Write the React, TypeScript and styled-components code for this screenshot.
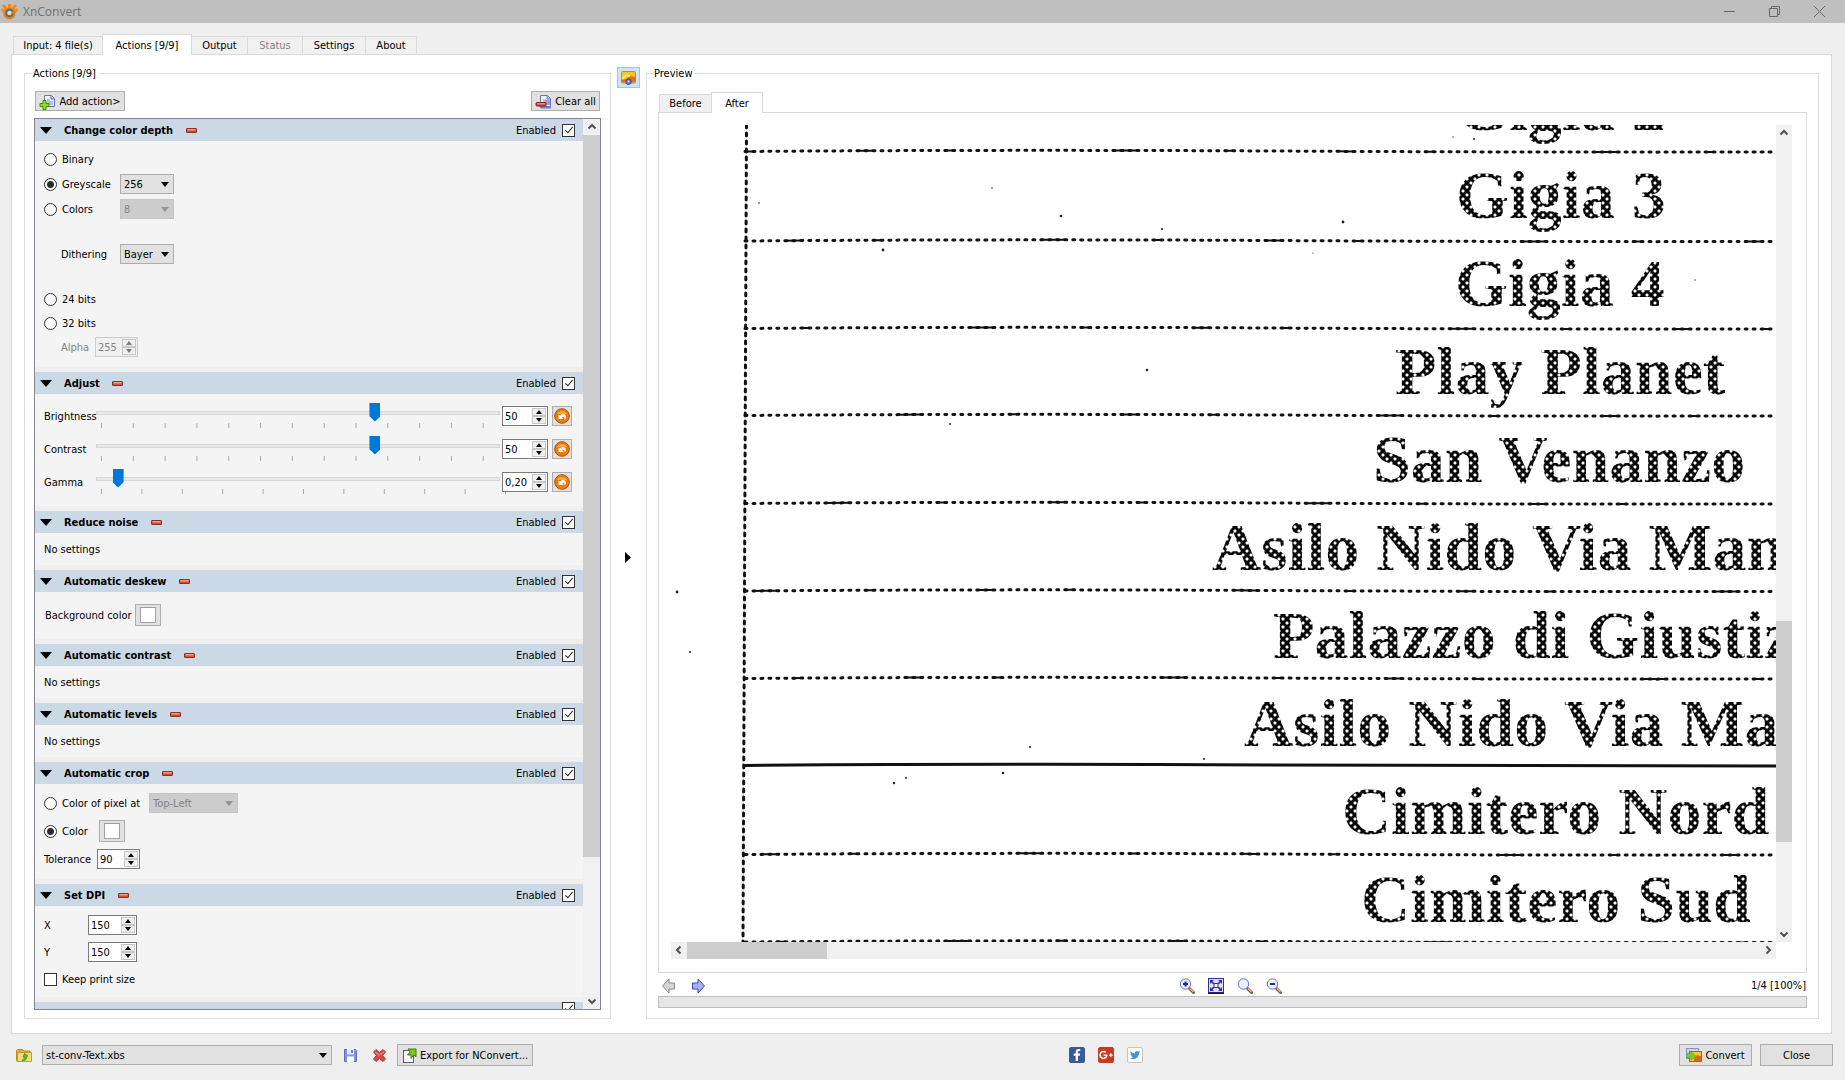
import React from "react";
import styled, { createGlobalStyle } from "styled-components";
import { FaFacebookF, FaGooglePlusG, FaTwitter } from "react-icons/fa";

const GlobalStyle = createGlobalStyle`
  *, *::before, *::after { box-sizing: border-box; }
  body {
    margin: 0;
    background: #efefef;
    color: #000;
    font-family: "DejaVu Sans Condensed", "Noto Sans", sans-serif;
    font-size: 11px;
    line-height: 16px;
  }
  button, input, select { font: inherit; color: inherit; margin: 0; }
  svg { display: block; }
`;

/* ---------- window ---------- */

const Window = styled.div`
  display: flex;
  flex-direction: column;
  height: 100vh;
  min-height: 1000px;
`;

const TitleBar = styled.header`
  display: flex;
  align-items: center;
  height: 23px;
  padding: 0 18px 0 1px;
  gap: 5px;
  background: #bfbfbf;
  color: #6e6e6e;
  font-family: "Open Sans", "Noto Sans", sans-serif;
  font-size: 12px;
`;

const TitleText = styled.h1`
  flex: 1;
  margin: 0;
  font: inherit;
`;

const WindowButtons = styled.div`
  display: flex;
  gap: 29px;
`;

const BareButton = styled.button`
  display: flex;
  align-items: center;
  justify-content: center;
  min-width: 16px;
  height: 16px;
  padding: 0;
  border: 0;
  background: none;
`;

/* ---------- tabs ---------- */

const TabBar = styled.nav<{ $pad: number }>`
  display: flex;
  align-items: flex-end;
  height: 20px;
  padding-left: ${(p) => p.$pad}px;
`;

const MainTabs = styled.div`
  padding: 11px 13px 0 11px;
`;

const Tab = styled.button<{ $active?: boolean; $width: number }>`
  width: ${(p) => p.$width}px;
  height: ${(p) => (p.$active ? 21 : 18)}px;
  margin-bottom: ${(p) => (p.$active ? -1 : 0)}px;
  padding: 1px 0 0;
  border: 1px solid #d9d9d9;
  border-bottom: 0;
  margin-left: -1px;
  background: ${(p) => (p.$active ? "#fff" : "#f0f0f0")};
  white-space: nowrap;
  z-index: ${(p) => (p.$active ? 1 : 0)};
  &:disabled { color: #838383; }
`;

const MainPane = styled.main`
  display: flex;
  flex: 1;
  min-height: 0;
  margin: 0 13px 0 11px;
  padding: 10px 12px 14px;
  border: 1px solid #d9d9d9;
  background: #fff;
`;

const Group = styled.fieldset<{ $grow?: boolean }>`
  display: flex;
  flex-direction: column;
  flex: ${(p) => (p.$grow ? "1 1 0" : "0 0 587px")};
  min-width: 0;
  margin: 0;
  padding: ${(p) => (p.$grow ? "11px 11px 10px" : "10px 9px 8px")};
  border: 1px solid #dcdcdc;
`;

const GroupTitle = styled.legend<{ $indent: number }>`
  margin-left: ${(p) => p.$indent}px;
  padding: 2px 3px 0 1px;
  line-height: 14px;
`;

/* ---------- buttons and fields ---------- */

const PushButton = styled.button<{ $width?: number; $tall?: boolean }>`
  display: flex;
  align-items: center;
  justify-content: center;
  gap: 3px;
  width: ${(p) => (p.$width ? `${p.$width}px` : "auto")};
  height: ${(p) => (p.$tall ? 22 : 20)}px;
  padding: 1px 3px 0;
  border: 1px solid #adadad;
  background: #e1e1e1;
  white-space: nowrap;
`;

const SelectBox = styled.span<{ $width: number; $off?: boolean }>`
  position: relative;
  display: block;
  width: ${(p) => p.$width}px;
  height: 20px;
  color: ${(p) => (p.$off ? "#838383" : "#000")};
  select {
    width: 100%;
    height: 20px;
    padding: 2px 16px 0 3px;
    border: 1px solid ${(p) => (p.$off ? "#c4c4c4" : "#adadad")};
    border-radius: 0;
    background: ${(p) => (p.$off ? "#cccccc" : "#e1e1e1")};
    appearance: none;
    opacity: 1;
  }
  &::after {
    content: "";
    position: absolute;
    right: 5px;
    top: 8px;
    border: 4px solid transparent;
    border-top: 5px solid ${(p) => (p.$off ? "#949494" : "#000")};
    border-bottom: 0;
    pointer-events: none;
  }
`;

const SpinFrame = styled.span<{ $width: number; $off?: boolean }>`
  display: flex;
  align-items: center;
  width: ${(p) => p.$width}px;
  height: 20px;
  padding: 1px;
  border: 1px solid ${(p) => (p.$off ? "#cccccc" : "#7a7a7a")};
  background: ${(p) => (p.$off ? "#f0f0f0" : "#fff")};
  color: ${(p) => (p.$off ? "#838383" : "#000")};
  input {
    flex: 1;
    width: 0;
    min-width: 0;
    padding: 2px 0 0 1px;
    border: 0;
    background: none;
    outline: none;
  }
`;

const SpinArrows = styled.span`
  display: grid;
  grid-template-rows: 8px 8px;
  width: 14px;
`;

const SpinArrow = styled.button`
  display: flex;
  align-items: center;
  justify-content: center;
  padding: 0;
  border: 1px solid #c6c6c6;
  background: #f0f0f0;
`;

const Radio = styled.input.attrs({ type: "radio" })`
  appearance: none;
  width: 13px;
  height: 13px;
  border: 1px solid #333;
  border-radius: 50%;
  background: #fff;
  &:checked { background: radial-gradient(circle, #2b2b2b 3px, #fff 4px); }
`;

const CheckBox = styled.input.attrs({ type: "checkbox" })`
  appearance: none;
  display: flex;
  justify-content: center;
  width: 13px;
  height: 13px;
  border: 1px solid #333;
  background: #fff;
  &:checked::after {
    content: "";
    width: 4px;
    height: 8px;
    border: solid #222;
    border-width: 0 1px 1px 0;
    transform: rotate(40deg);
  }
`;

const SwatchButton = styled.button`
  width: 26px;
  height: 22px;
  padding: 2px 4px;
  border: 1px solid #adadad;
  background: #e1e1e1;
  &::before {
    content: "";
    display: block;
    height: 16px;
    border: 1px solid #a0a0a0;
    background: #fff;
  }
`;

/* ---------- actions list ---------- */

const Toolbar = styled.div`
  display: flex;
  justify-content: space-between;
  padding: 0 1px;
  margin-bottom: 7px;
`;

const ListFrame = styled.div`
  display: flex;
  flex: 1;
  min-height: 0;
  border: 1px solid #828790;
  background: #efefef;
`;

const ListContent = styled.div`
  display: flex;
  flex: 1;
  flex-direction: column;
  gap: 5px;
  min-width: 0;
  overflow: hidden;
`;

const ActionHeader = styled.div`
  display: flex;
  align-items: center;
  height: 22px;
  padding: 0 8px 0 5px;
  background: #cbd9e6;
`;

const ActionTitle = styled.h2`
  margin: 0 10px 0 12px;
  padding-top: 2px;
  font-size: 11px;
  line-height: 16px;
`;

const EnabledLabel = styled.label`
  display: flex;
  align-items: center;
  gap: 6px;
  margin-left: auto;
`;

const LabelText = styled.span`
  padding-top: 2px;
`;

const ActionBody = styled.div<{ $pad?: string; $gap?: number }>`
  display: flex;
  flex-direction: column;
  gap: ${(p) => p.$gap ?? 7}px;
  padding: ${(p) => p.$pad ?? "9px 9px 7px"};
  background: #f4f4f4;
`;

const Rows = styled.div<{ $gap: number }>`
  display: flex;
  flex-direction: column;
  gap: ${(p) => p.$gap}px;
`;

const Row = styled.div<{ $h?: number; $gap?: number }>`
  display: flex;
  align-items: center;
  gap: ${(p) => p.$gap ?? 7}px;
  height: ${(p) => p.$h ?? 20}px;
`;

const Choice = styled.label<{ $width?: number }>`
  display: flex;
  align-items: center;
  gap: 5px;
  width: ${(p) => (p.$width ? `${p.$width}px` : "auto")};
  white-space: nowrap;
`;

const Caption = styled.label<{ $width?: number; $indent?: boolean; $off?: boolean }>`
  width: ${(p) => (p.$width ? `${p.$width}px` : "auto")};
  padding-top: 2px;
  padding-left: ${(p) => (p.$indent ? 17 : 0)}px;
  color: ${(p) => (p.$off ? "#838383" : "inherit")};
  white-space: nowrap;
`;

const SliderRow = styled.div`
  display: grid;
  grid-template-columns: 52px 1fr 46px 24px;
  align-items: center;
  height: 26px;
`;

const SliderColumn = styled.div`
  display: flex;
  flex-direction: column;
  height: 26px;
  margin-right: 2px;
  svg { align-self: stretch; margin: 1px 5px 0; overflow: visible; }
`;

const Slider = styled.input.attrs({ type: "range" })`
  appearance: none;
  width: 100%;
  height: 19px;
  background: none;
  &::-webkit-slider-runnable-track {
    height: 4px;
    border: 1px solid #d6d6d6;
    background: #e7eaea;
  }
  &::-webkit-slider-thumb {
    appearance: none;
    width: 11px;
    height: 19px;
    margin-top: -9px;
    background: #0078d7;
    clip-path: polygon(0 0, 100% 0, 100% 72%, 50% 100%, 0 72%);
  }
`;

const ResetButton = styled(PushButton)`
  width: 20px;
  margin-left: 4px;
  padding: 0;
`;

/* ---------- scroll bars ---------- */

const ScrollBar = styled.div<{ $horizontal?: boolean }>`
  display: flex;
  flex-direction: ${(p) => (p.$horizontal ? "row" : "column")};
  flex: 0 0 17px;
  background: #f0f0f0;
`;

const ScrollTrack = styled.div<{ $horizontal?: boolean; $before: number; $size: number; $after: number }>`
  display: grid;
  flex: 1;
  ${(p) => (p.$horizontal ? "grid-template-columns" : "grid-template-rows")}:
    ${(p) => `${p.$before}fr ${p.$size}fr ${p.$after}fr`};
`;

const ScrollThumb = styled.div<{ $horizontal?: boolean }>`
  ${(p) => (p.$horizontal ? "grid-column: 2" : "grid-row: 2")};
  background: #cdcdcd;
`;

/* ---------- splitter ---------- */

const Splitter = styled.div`
  display: flex;
  flex-direction: column;
  align-items: center;
  flex: 0 0 35px;
  padding: 2px 1px 0 0;
`;

const PreviewToggle = styled.button`
  width: 23px;
  height: 21px;
  padding: 2px 3px;
  border: 1px solid #90c8f6;
  background: #cce4f7;
`;

const SplitHandle = styled(BareButton)`
  flex: 1;
  padding: 8px 0 0;
`;

/* ---------- preview ---------- */

const PreviewPane = styled.section`
  display: grid;
  flex: 1;
  grid-template-columns: 1fr 16px;
  grid-template-rows: 1fr 17px;
  min-height: 0;
  padding: 12px 14px 13px 12px;
  border: 1px solid #d9d9d9;
`;

const ScanView = styled.div`
  position: relative;
  min-width: 0;
  overflow: hidden;
  background: #fff;
`;

const ScanDrawing = styled.svg`
  position: absolute;
  top: 0;
  left: 0;
`;

const ScanRows = styled.ol`
  position: absolute;
  inset: 0;
  margin: 0;
  padding: 0;
  list-style: none;
  overflow: hidden;
  display: grid;
  grid-auto-rows: 88px;
  align-content: start;
  margin-top: -62px;
  color: #080808;
  font: bold 68px/88px "Liberation Serif", serif;
  white-space: nowrap;

  /* white halftone screen laid over the letters */
  &::after {
    content: "";
    position: absolute;
    inset: 0;
    background-image:
      radial-gradient(circle, #fff 1px, transparent 2px),
      radial-gradient(circle, #fff 1px, transparent 2px);
    background-size: 8px 8px;
    background-position: 0 0, 4px 4px;
  }
`;

const ScanRow = styled.li<{ $start: number }>`
  padding-left: ${(p) => p.$start}px;
`;

const PreviewTools = styled.div`
  display: grid;
  grid-template-columns: 1fr auto 1fr;
  align-items: center;
  height: 23px;
  padding: 2px 1px 0 3px;
`;

const ToolGroup = styled.div<{ $side?: "start" | "end" }>`
  display: flex;
  gap: 13px;
  justify-content: ${(p) => (p.$side === "end" ? "flex-end" : "flex-start")};
  padding-right: ${(p) => (p.$side ? 0 : 7)}px;
`;

const Progress = styled.div`
  height: 12px;
  border: 1px solid #bcbcbc;
  background: #e6e6e6;
`;

/* ---------- footer ---------- */

const Footer = styled.footer`
  display: grid;
  grid-template-columns: 1fr auto 1fr;
  align-items: center;
  height: 46px;
  padding: 0 12px 4px 16px;
`;

const FooterLeft = styled.div`
  display: flex;
  align-items: center;
  gap: 10px;
`;

const FooterIcons = styled.div`
  display: flex;
  gap: 13px;
`;

const Socials = styled.div`
  display: flex;
  gap: 13px;
  padding-left: 363px;
`;

const SocialLink = styled.a<{ $bg: string; $fg: string }>`
  display: flex;
  align-items: center;
  justify-content: center;
  width: 16px;
  height: 16px;
  border: 1px solid ${(p) => (p.$bg === "#fff" ? "#c4c4c4" : p.$bg)};
  border-radius: 2px;
  background: ${(p) => p.$bg};
  color: ${(p) => p.$fg};
`;

const FooterRight = styled.div`
  display: flex;
  gap: 8px;
  justify-content: flex-end;
`;

/* ---------- icons ---------- */

const AppIcon = () => (
  <svg width="17" height="18" viewBox="0 0 17 18" aria-hidden="true">
    <g stroke="#f08a1c" strokeWidth="3" strokeLinecap="round">
      <path d="M8.500 4V2M4.500 5 3 3M12.500 5 14 3M3 8.500 1.500 7M14 8.500 15.500 7" />
    </g>
    <circle cx="8.500" cy="10.500" r="6" fill="#ee7d12" />
    <circle cx="8.500" cy="10" r="3.300" fill="#f7d9a8" stroke="#3a7592" strokeWidth="2" />
    <path d="M10.500 9.500h3" stroke="#ee7d12" strokeWidth="2" />
  </svg>
);

const Chevron = ({ dir }: { dir: "up" | "down" | "left" | "right" }) => {
  const d = { up: "M4.500 9.500 8 6l3.500 3.500", down: "M4.500 6.500 8 10l3.500-3.500", left: "M9.500 4.500 6 8l3.500 3.500", right: "M6.500 4.500 10 8l-3.500 3.500" }[dir];
  return (
    <svg width="16" height="16" viewBox="0 0 16 16" aria-hidden="true">
      <path d={d} fill="none" stroke="#505050" strokeWidth="2" />
    </svg>
  );
};

const Triangle = ({ dir, off }: { dir: "up" | "down"; off?: boolean }) => (
  <svg width="6" height="4" viewBox="0 0 6 4" aria-hidden="true">
    <path d={dir === "up" ? "M0 4 3 0l3 4z" : "M0 0h6L3 4z"} fill={off ? "#777" : "#000"} />
  </svg>
);

const Page = () => (
  <>
    <path d="M5.500 1.500h7l3 3v8h-10z" fill="#f3f4ff" stroke="#6a6fae" />
    <path d="M12 1.500v3.500h3.500" fill="#c9cdf0" stroke="#6a6fae" />
    <path d="M8 6h3M8 8h6M8 10h6" stroke="#8289c4" />
  </>
);

const AddIcon = () => (
  <svg width="17" height="16" viewBox="0 0 17 16" aria-hidden="true">
    <Page />
    <path d="M4 6.500h3v3h3v3H7v3H4v-3H1v-3h3z" fill="#8fe01c" stroke="#3f8d0c" />
  </svg>
);

const ClearIcon = () => (
  <svg width="17" height="16" viewBox="0 0 17 16" aria-hidden="true">
    <Page />
    <path d="M4 12h12v2.500H6z" fill="#7478c0" />
    <path d="M10 6h5v5h-5z" fill="#9a9edb" />
    <rect x="1" y="8.500" width="10" height="3.500" rx="1" fill="#cf4236" stroke="#83231b" />
    <path d="M2 9.800h8" stroke="#f6b0a4" />
  </svg>
);

const MinusIcon = () => (
  <svg width="11" height="5" viewBox="0 0 11 5" aria-hidden="true">
    <rect x=".5" y=".5" width="10" height="4" rx=".5" fill="#d0503c" stroke="#8e2f22" />
    <path d="M1.500 1.800h8" stroke="#f7c3b4" />
  </svg>
);

const ResetIcon = () => (
  <svg width="16" height="16" viewBox="0 0 16 16" aria-hidden="true">
    <circle cx="8" cy="8" r="7.300" fill="#ee7a0c" stroke="#a95305" />
    <path d="M3 6a5.500 5 0 0 1 10 0z" fill="#f9a94a" />
    <path d="M4.500 11V6.500L6 7.800c1.500-3 6-2.300 6 1.200 0 1.200-.8 2-1.500 2.300.3-1.800-.8-3.300-2.500-2.300L9.500 11z" fill="#fff" />
  </svg>
);

const PictureIcon = () => (
  <svg width="15" height="15" viewBox="0 0 15 15" aria-hidden="true">
    <rect x=".5" y="1.500" width="14" height="11.500" rx="1" fill="#f6c51d" stroke="#c08a2c" />
    <path d="M1 12V10l4-1 4-3 5 1v5z" fill="#d8701a" />
    <path d="M1 8.500 6 5l3 1" fill="none" stroke="#fbe37e" strokeWidth="2" />
    <circle cx="7.500" cy="11.800" r="2.700" fill="#6f74c8" stroke="#3c4192" />
    <circle cx="7.500" cy="11.500" r="1" fill="#dfe2ff" />
  </svg>
);

const ArrowIcon = ({ off }: { off?: boolean }) => (
  <svg width="16" height="16" viewBox="0 0 16 16" aria-hidden="true">
    <path
      d={off ? "M1.500 8 8 1v4h5.500v6H8v4z" : "M14.500 8 8 1v4H2.500v6H8v4z"}
      fill={off ? "#d4d6d2" : "#a9b0fa"}
      stroke={off ? "#8a8d88" : "#4046b0"}
    />
  </svg>
);

const LensIcon = ({ sign }: { sign?: "+" | "-" }) => (
  <svg width="16" height="16" viewBox="0 0 16 16" aria-hidden="true">
    <path d="m10.500 10.500 4 4" stroke="#7a5632" strokeWidth="3" strokeLinecap="round" />
    <path d="m11 10.500 3.500 3.500" stroke="#efb878" strokeWidth="1.200" />
    <circle cx="6.500" cy="6" r="5.200" fill="#eef0ff" stroke="#6a6fc8" strokeWidth="1" />
    {sign && <path d={sign === "+" ? "M4 6h5M6.500 3.500v5" : "M4 6h5"} stroke="#23289a" strokeWidth="2" />}
  </svg>
);

const FitIcon = () => (
  <svg width="16" height="16" viewBox="0 0 16 16" aria-hidden="true">
    <rect x=".5" y=".5" width="15" height="14" fill="#dfe2ff" stroke="#2a2f9c" />
    <path d="M0 15.300h16" stroke="#14164a" strokeWidth="1.400" />
    <path d="M2 2h4L2 6zM14 2h-4l4 4zM2 13h4L2 9zM14 13h-4l4-4z" fill="#2a2f9c" />
    <path d="m3 3 3 3M13 3l-3 3M3 12l3-3M13 12l-3-3" stroke="#2a2f9c" strokeWidth="1.500" />
    <rect x="6" y="5.500" width="4" height="4" fill="#fff" stroke="#2a2f9c" />
  </svg>
);

const FolderIcon = () => (
  <svg width="16" height="15" viewBox="0 0 16 15" aria-hidden="true">
    <path d="M.5 12.500v-10l1-1h5l1.500 1.500h6v10z" fill="#d9b13c" stroke="#b28d22" />
    <path d="M1 13.500 2 4.500h13.500v9z" fill="#f3dc74" stroke="#c29c2c" />
    <path d="M6 12.500c4 .5 5-2 4.500-4L12 8 8.500 5.500 7 9l1.300-.3C8.500 10 7.500 11.500 6 12.500z" fill="#6cb81a" stroke="#37780a" strokeWidth=".6" />
  </svg>
);

const SaveIcon = () => (
  <svg width="15" height="15" viewBox="0 0 15 15" aria-hidden="true">
    <path d="M1.500 1.500h11l1 1v11h-12z" fill="#8c90dc" stroke="#6267b8" />
    <rect x="4" y="1" width="7" height="5.500" fill="#e6e8ff" />
    <rect x="4" y="8.500" width="7" height="5.500" fill="#fff" />
    <path d="M9 2v3" stroke="#5257ae" strokeWidth="1.500" />
  </svg>
);

const DeleteIcon = () => (
  <svg width="15" height="15" viewBox="0 0 15 15" aria-hidden="true">
    <path d="m1.500 4 2.500-2.500 3.500 3 3.500-3L13.500 4l-3 3.500 3 3.500-2.500 2.500-3.500-3-3.500 3L1.500 11l3-3.500z" fill="#d84a4a" stroke="#b03434" />
    <path d="m3 4 4.500 3L12 4" fill="none" stroke="#f29a94" />
  </svg>
);

const ExportIcon = () => (
  <svg width="15" height="16" viewBox="0 0 15 16" aria-hidden="true">
    <rect x="1.500" y="2.500" width="10" height="12" fill="#fdfdff" stroke="#4c5a80" />
    <path d="M6 1h8v8l-2-2-3 3.500v-3.500H5.500L8 4z" fill="#79c81a" stroke="#3c7c0b" />
  </svg>
);

const ConvertIcon = () => (
  <svg width="16" height="15" viewBox="0 0 16 15" aria-hidden="true">
    <rect x=".5" y=".5" width="12" height="10" fill="#c4d6ee" stroke="#8193b8" />
    <rect x="3.500" y="3.500" width="12" height="10" fill="#f5c83a" stroke="#a06818" />
    <path d="M8 13v-3l3-3 4 1v5z" fill="#dd6a12" />
    <path d="M1 5.500h4V3.500L10 8l-5 4V10H1z" fill="#7ccc24" stroke="#5aa018" strokeWidth=".5" />
  </svg>
);

/* ---------- composed parts ---------- */

const Spin = ({ id, label, value, width, off }: { id: string; label?: string; value: string; width: number; off?: boolean }) => (
  <SpinFrame $width={width} $off={off}>
    <input id={id} aria-label={label} defaultValue={value} disabled={off} />
    <SpinArrows>
      <SpinArrow type="button" aria-label="Increase" disabled={off}><Triangle dir="up" off={off} /></SpinArrow>
      <SpinArrow type="button" aria-label="Decrease" disabled={off}><Triangle dir="down" off={off} /></SpinArrow>
    </SpinArrows>
  </SpinFrame>
);

const Pick = ({ id, label, value, width, off }: { id?: string; label?: string; value: string; width: number; off?: boolean }) => (
  <SelectBox $width={width} $off={off}>
    <select id={id} aria-label={label} disabled={off} defaultValue={value}>
      <option>{value}</option>
    </select>
  </SelectBox>
);

const Action = ({ title, children }: { title: string; children?: React.ReactNode }) => (
  <section>
    <ActionHeader>
      <svg width="12" height="7" viewBox="0 0 12 7" aria-hidden="true"><path d="M0 0h12L6 7z" /></svg>
      <ActionTitle>{title}</ActionTitle>
      <BareButton type="button" aria-label={`Remove ${title}`}><MinusIcon /></BareButton>
      <EnabledLabel><LabelText>Enabled</LabelText><CheckBox defaultChecked /></EnabledLabel>
    </ActionHeader>
    {children}
  </section>
);

const Adjustment = ({ name, min, max, value, step, tick, shown }: { name: string; min: number; max: number; value: number; step: number; tick: number; shown: string }) => {
  const ticks: number[] = [];
  for (let v = 0; v <= max - min + 0.01; v += tick) ticks.push((v / (max - min)) * 100);
  return (
    <SliderRow>
      <Caption htmlFor={`slide-${name}`}>{name}</Caption>
      <SliderColumn>
        <Slider id={`slide-${name}`} min={min} max={max} step={step} defaultValue={value} />
        <svg height="5" width="100%" aria-hidden="true">
          {ticks.map((t) => <rect key={t} x={`${t}%`} y="0" width="1" height="5" fill="#a8a8a8" />)}
        </svg>
      </SliderColumn>
      <Spin id={`spin-${name}`} label={name} value={shown} width={46} />
      <ResetButton type="button" aria-label={`Reset ${name}`}><ResetIcon /></ResetButton>
    </SliderRow>
  );
};

const NoSettings = () => <ActionBody>No settings</ActionBody>;

const scanLines = [26, 115.5, 203, 290, 378, 465.5, 553, 640, 729, 816.5];
const specks: [number, number, number][] = [
  [88, 78, 0.8], [321, 63, 0.8], [390, 91, 1.3], [491, 104, 1.1], [212, 125, 1.4], [672, 97, 1.4],
  [476, 245, 1.3], [279, 299, 1], [6, 467, 1.4], [19, 527, 1], [359, 622, 1.1], [332, 648, 1.3],
  [223, 658, 1.2], [235, 653, 0.9], [533, 634, 1], [803, 14, 1], [782, 12, 0.7], [642, 128, 0.6], [1024, 155, 0.7],
];
const scanRows: [string, number][] = [
  ["Gigia 2", 785], ["Gigia 3", 785], ["Gigia 4", 784], ["Play Planet", 724], ["San Venanzo", 702],
  ["Asilo Nido Via Man", 541], ["Palazzo di Giustiz", 602], ["Asilo Nido Via Ma", 573],
  ["Cimitero Nord", 671], ["Cimitero Sud", 690],
];

const ScannedPage = () => (
  <ScanView>
    <ScanRows>
      {scanRows.map(([text, start]) => <ScanRow key={text} $start={start}>{text}</ScanRow>)}
    </ScanRows>
    <ScanDrawing width="1105" height="817" aria-hidden="true">
      <g fill="none" stroke="#111" strokeWidth="3" strokeLinecap="round">
        <path d="M75.500 0 72 817" strokeDasharray="3 5" />
        {scanLines.map((y, i) => {
          const d = `M74 ${y + 0.5}Q330 ${y - 1.5} 600 ${y}T1105 ${y + 1}`;
          return i === 7 ? (
            <path key={y} d={d} />
          ) : (
            <g key={y}>
              <path d={d} strokeDasharray="2 6" />
              <path d={d} strokeWidth="2" strokeDasharray="8 104 16 72 8 160 24 88" strokeDashoffset={i * 72} />
            </g>
          );
        })}
      </g>
      {specks.map(([x, y, r]) => <circle key={`${x}-${y}`} cx={x} cy={y} r={r} fill="#222" />)}
    </ScanDrawing>
  </ScanView>
);

const Scroller = ({ horizontal, before, size, after }: { horizontal?: boolean; before: number; size: number; after: number }) => (
  <ScrollBar $horizontal={horizontal}>
    <BareButton type="button" aria-label="Scroll back"><Chevron dir={horizontal ? "left" : "up"} /></BareButton>
    <ScrollTrack $horizontal={horizontal} $before={before} $size={size} $after={after}>
      <ScrollThumb $horizontal={horizontal} />
    </ScrollTrack>
    <BareButton type="button" aria-label="Scroll forward"><Chevron dir={horizontal ? "right" : "down"} /></BareButton>
  </ScrollBar>
);

export default function App() {
  return (
    <Window>
      <GlobalStyle />
      <TitleBar>
        <AppIcon />
        <TitleText>XnConvert</TitleText>
        <WindowButtons>
          <BareButton type="button" aria-label="Minimize">
            <svg width="11" height="11"><path d="M0 5.500h11" stroke="#666" /></svg>
          </BareButton>
          <BareButton type="button" aria-label="Restore">
            <svg width="11" height="11" fill="none" stroke="#666"><path d="M.5 2.500h8v8h-8zM2.500 2.500v-2h8v8h-2" /></svg>
          </BareButton>
          <BareButton type="button" aria-label="Close window">
            <svg width="11" height="11"><path d="m0 0 11 11M11 0 0 11" stroke="#666" /></svg>
          </BareButton>
        </WindowButtons>
      </TitleBar>

      <MainTabs>
        <TabBar $pad={3}>
          <Tab type="button" $width={90}>Input: 4 file(s)</Tab>
          <Tab type="button" $width={90} $active>Actions [9/9]</Tab>
          <Tab type="button" $width={57}>Output</Tab>
          <Tab type="button" $width={56} disabled>Status</Tab>
          <Tab type="button" $width={64}>Settings</Tab>
          <Tab type="button" $width={52}>About</Tab>
        </TabBar>
      </MainTabs>

      <MainPane>
        <Group>
          <GroupTitle $indent={-2}>Actions [9/9]</GroupTitle>
          <Toolbar>
            <PushButton type="button" $width={90}><AddIcon />Add action&gt;</PushButton>
            <PushButton type="button" $width={69}><ClearIcon />Clear all</PushButton>
          </Toolbar>
          <ListFrame>
            <ListContent>
              <Action title="Change color depth">
                <ActionBody $pad="8px 9px 10px" $gap={25}>
                  <Rows $gap={5}>
                    <Row><Choice><Radio name="depth" /><LabelText>Binary</LabelText></Choice></Row>
                    <Row $gap={0}>
                      <Choice $width={76}><Radio name="depth" defaultChecked /><LabelText>Greyscale</LabelText></Choice>
                      <Pick label="Grey levels" value="256" width={54} />
                    </Row>
                    <Row $gap={0}>
                      <Choice $width={76}><Radio name="depth" /><LabelText>Colors</LabelText></Choice>
                      <Pick label="Color count" value="8" width={54} off />
                    </Row>
                  </Rows>
                  <Row $gap={0}>
                    <Caption htmlFor="dither" $indent $width={76}>Dithering</Caption>
                    <Pick id="dither" value="Bayer" width={54} />
                  </Row>
                  <Rows $gap={4}>
                    <Row><Choice><Radio name="depth" /><LabelText>24 bits</LabelText></Choice></Row>
                    <Row><Choice><Radio name="depth" /><LabelText>32 bits</LabelText></Choice></Row>
                    <Row $gap={0}>
                      <Caption htmlFor="alpha" $indent $off $width={51}>Alpha</Caption>
                      <Spin id="alpha" value="255" width={43} off />
                    </Row>
                  </Rows>
                </ActionBody>
              </Action>
              <Action title="Adjust">
                <ActionBody $pad="9px 11px 11px 9px">
                  <Adjustment name="Brightness" min={-127} max={127} step={1} value={50} tick={20} shown="50" />
                  <Adjustment name="Contrast" min={-127} max={127} step={1} value={50} tick={20} shown="50" />
                  <Adjustment name="Gamma" min={0} max={5} step={0.1} value={0.2} tick={0.5} shown="0,20" />
                </ActionBody>
              </Action>
              <Action title="Reduce noise"><NoSettings /></Action>
              <Action title="Automatic deskew">
                <ActionBody $pad="12px 10px 13px">
                  <Row $h={22} $gap={0}>
                    <Caption htmlFor="bg-color" $width={90}>Background color</Caption>
                    <SwatchButton id="bg-color" type="button" />
                  </Row>
                </ActionBody>
              </Action>
              <Action title="Automatic contrast"><NoSettings /></Action>
              <Action title="Automatic levels"><NoSettings /></Action>
              <Action title="Automatic crop">
                <ActionBody $pad="9px 9px 10px">
                  <Row $gap={0}>
                    <Choice $width={105}><Radio name="crop" /><LabelText>Color of pixel at</LabelText></Choice>
                    <Pick label="Pixel position" value="Top-Left" width={89} off />
                  </Row>
                  <Row $h={22} $gap={0}>
                    <Choice $width={55}><Radio name="crop" defaultChecked /><LabelText>Color</LabelText></Choice>
                    <SwatchButton type="button" aria-label="Crop color" />
                  </Row>
                  <Row $gap={0}>
                    <Caption htmlFor="tolerance" $width={53}>Tolerance</Caption>
                    <Spin id="tolerance" value="90" width={43} />
                  </Row>
                </ActionBody>
              </Action>
              <Action title="Set DPI">
                <ActionBody $pad="9px 9px 8px">
                  <Row $gap={0}><Caption htmlFor="dpi-x" $width={44}>X</Caption><Spin id="dpi-x" value="150" width={49} /></Row>
                  <Row $gap={0}><Caption htmlFor="dpi-y" $width={44}>Y</Caption><Spin id="dpi-y" value="150" width={49} /></Row>
                  <Row><Choice><CheckBox /><LabelText>Keep print size</LabelText></Choice></Row>
                </ActionBody>
              </Action>
              <ActionHeader>
                <EnabledLabel as="div"><CheckBox aria-label="Enabled" defaultChecked /></EnabledLabel>
              </ActionHeader>
            </ListContent>
            <Scroller before={0} size={722} after={136} />
          </ListFrame>
        </Group>

        <Splitter>
          <PreviewToggle type="button" aria-label="Toggle preview"><PictureIcon /></PreviewToggle>
          <SplitHandle type="button" aria-label="Collapse preview">
            <svg width="6" height="11"><path d="M0 0 6 5.500 0 11z" /></svg>
          </SplitHandle>
        </Splitter>

        <Group $grow>
          <GroupTitle $indent={-5}>Preview</GroupTitle>
          <TabBar $pad={2}>
            <Tab type="button" $width={53}>Before</Tab>
            <Tab type="button" $width={52} $active>After</Tab>
          </TabBar>
          <PreviewPane>
            <ScannedPage />
            <Scroller before={480} size={221} after={84} />
            <Scroller horizontal before={0} size={140} after={931} />
          </PreviewPane>
          <PreviewTools>
            <ToolGroup $side="start">
              <BareButton type="button" aria-label="Previous image" disabled><ArrowIcon off /></BareButton>
              <BareButton type="button" aria-label="Next image"><ArrowIcon /></BareButton>
            </ToolGroup>
            <ToolGroup>
              <BareButton type="button" aria-label="Zoom in"><LensIcon sign="+" /></BareButton>
              <BareButton type="button" aria-label="Fit"><FitIcon /></BareButton>
              <BareButton type="button" aria-label="Actual size"><LensIcon /></BareButton>
              <BareButton type="button" aria-label="Zoom out"><LensIcon sign="-" /></BareButton>
            </ToolGroup>
            <ToolGroup $side="end">1/4 [100%]</ToolGroup>
          </PreviewTools>
          <Progress role="progressbar" aria-label="Progress" />
        </Group>
      </MainPane>

      <Footer>
        <FooterLeft>
          <BareButton type="button" aria-label="Open"><FolderIcon /></BareButton>
          <Pick label="Script" value="st-conv-Text.xbs" width={290} />
          <FooterIcons>
            <BareButton type="button" aria-label="Save"><SaveIcon /></BareButton>
            <BareButton type="button" aria-label="Delete"><DeleteIcon /></BareButton>
          </FooterIcons>
          <PushButton type="button" $width={136} $tall><ExportIcon />Export for NConvert...</PushButton>
        </FooterLeft>
        <Socials>
          <SocialLink href="#facebook" aria-label="Facebook" $bg="#3b5998" $fg="#fff"><FaFacebookF size={12} /></SocialLink>
          <SocialLink href="#google" aria-label="Google Plus" $bg="#c83a24" $fg="#fff"><FaGooglePlusG size={14} /></SocialLink>
          <SocialLink href="#twitter" aria-label="Twitter" $bg="#fff" $fg="#3a97d4"><FaTwitter size={10} /></SocialLink>
        </Socials>
        <FooterRight>
          <PushButton type="button" $width={73} $tall><ConvertIcon />Convert</PushButton>
          <PushButton type="button" $width={73} $tall>Close</PushButton>
        </FooterRight>
      </Footer>
    </Window>
  );
}
